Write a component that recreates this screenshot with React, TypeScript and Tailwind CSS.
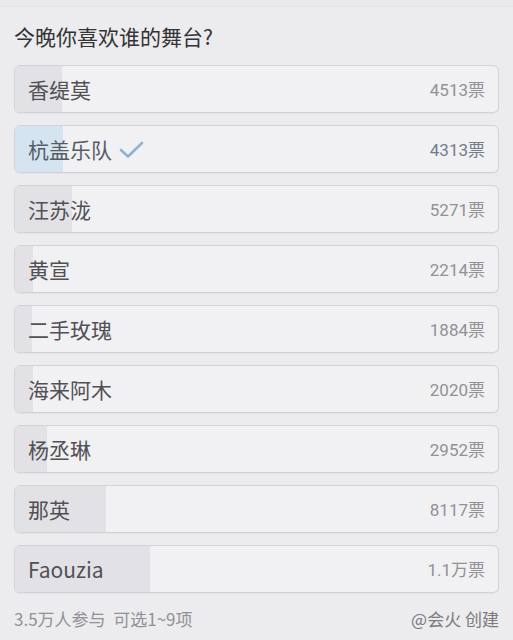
import React from "react";

const items = [
  { name: "香缇莫", votes: "4513", w: 47 },
  { name: "杭盖乐队", votes: "4313", w: 48, checked: true },
  { name: "汪苏泷", votes: "5271", w: 57 },
  { name: "黄宣", votes: "2214", w: 18 },
  { name: "二手玫瑰", votes: "1884", w: 17 },
  { name: "海来阿木", votes: "2020", w: 18 },
  { name: "杨丞琳", votes: "2952", w: 32 },
  { name: "那英", votes: "8117", w: 91 },
  { name: "Faouzia", votes: "1.1万", w: 135 },
];

export default function App() {
  return (
    <div
      className="w-[513px] h-[640px] bg-[#ecebee] overflow-hidden"
      style={{ fontFamily: '"Noto Sans CJK SC", "Noto Sans", sans-serif' }}
    >
      <div className="h-[7px] bg-[#e9e8eb] border-b border-[#e0dfe2]" />
      <div className="px-[14px]">
        <div className="mt-[15px] h-[28px] flex items-center text-[21px] text-[#333235] leading-none">
          今晚你喜欢谁的舞台?
        </div>
        <div className="mt-[15px] flex flex-col gap-[12px]">
          {items.map((it) => (
            <div
              key={it.name}
              className="relative h-[48px] rounded-[6px] border border-[#d3d2d6] bg-[#f1f0f3] overflow-hidden shadow-[0_1px_1px_rgba(0,0,0,0.04)]"
            >
              <div
                className={
                  "absolute left-0 top-0 bottom-0 " +
                  (it.checked ? "bg-[#d4e4f1]" : "bg-[#e2e1e5]")
                }
                style={{ width: it.w }}
              />
              <div className="relative h-full flex items-center justify-between pl-[13px] pr-[13px]">
                <div className="flex items-center">
                  <span
                    className={
                      "text-[21px] leading-none " +
                      (it.checked ? "text-[#565c66]" : "text-[#515054]")
                    }
                  >
                    {it.name}
                  </span>
                  {it.checked && (
                    <svg width="26" height="20" viewBox="0 0 26 20" className="ml-[7px] mt-[2px]">
                      <path
                        d="M2 10 L9 16.5 L23 3"
                        fill="none"
                        stroke="#8fb3d3"
                        strokeWidth="2.6"
                        strokeLinecap="round"
                        strokeLinejoin="round"
                      />
                    </svg>
                  )}
                </div>
                <span
                  className={
                    "text-[17px] leading-none " +
                    (it.checked ? "text-[#737d89]" : "text-[#929195]")
                  }
                >
                  <span style={{ fontFamily: 'Roboto, "Noto Sans CJK SC", sans-serif' }}>
                    {it.votes.replace("万", "")}
                  </span>
                  {it.votes.includes("万") ? "万" : ""}票
                </span>
              </div>
            </div>
          ))}
        </div>
        <div className="mt-[17px] flex items-center justify-between text-[17px] text-[#929195] leading-none">
          <span>3.5万人参与&nbsp;&nbsp;可选1~9项</span>
          <span className="text-[#7b7a7e]">@会火 创建</span>
        </div>
      </div>
    </div>
  );
}
